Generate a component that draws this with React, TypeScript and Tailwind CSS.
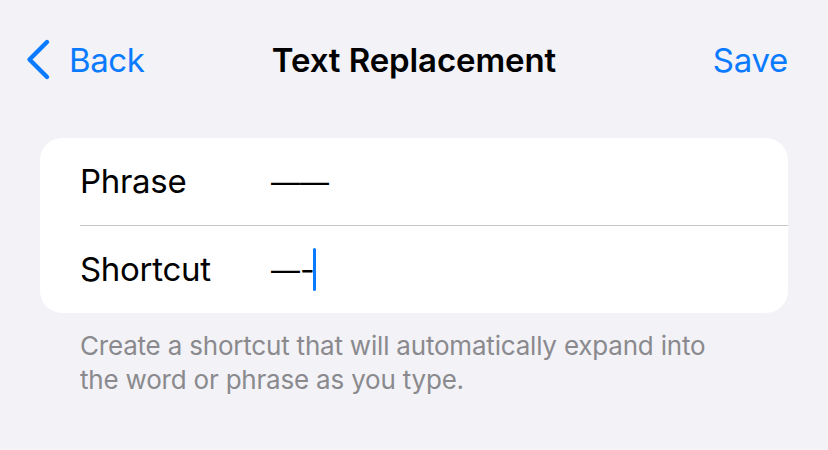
export default function App() {
  return (
    <div
      className="w-[828px] h-[450px] bg-[#f2f2f7] overflow-hidden"
      style={{ fontFamily: 'Inter, "Noto Sans", sans-serif' }}
    >
      {/* Navigation bar */}
      <div className="relative h-[120px] flex items-start pt-[38px] px-[26px]">
        <button className="flex items-center text-[#0a7aff]">
          <svg width="26" height="44" viewBox="0 0 26 44" fill="none">
            <polyline
              points="21,4 3.5,21.5 21,39"
              stroke="currentColor"
              strokeWidth="4.4"
              strokeLinecap="round"
              strokeLinejoin="round"
            />
          </svg>
          <span className="ml-[17px] text-[33px] tracking-[-0.4px] leading-[44px]">Back</span>
        </button>
        <h1 className="absolute left-0 right-0 top-[38px] text-center text-[33px] leading-[44px] font-semibold tracking-[-0.1px] text-black">
          Text Replacement
        </h1>
        <button className="ml-auto mr-[14px] text-[#0a7aff] text-[33px] leading-[44px] tracking-[-0.3px]">
          Save
        </button>
      </div>

      {/* Form card */}
      <div className="mx-[40px] mt-[18px] bg-white rounded-[22px] overflow-hidden">
        <div className="flex items-center h-[87px] pl-[40px]">
          <div className="flex items-baseline h-[48px] leading-[48px] text-black -mt-[2px]">
            <span className="w-[191px] text-[33px] tracking-[-0.3px]">Phrase</span>
            <span className="text-[29px]">——</span>
          </div>
        </div>
        <div className="ml-[40px] h-px bg-[#c6c6c8]" />
        <div className="flex items-center h-[87px] pl-[40px]">
          <div className="flex items-baseline h-[48px] leading-[48px] text-black -mt-[2px]">
            <span className="w-[191px] text-[33px] tracking-[-0.3px]">Shortcut</span>
            <span className="text-[29px]">—</span>
            <span className="text-[32px]">-</span>
            <span className="self-center w-[3px] h-[43px] rounded-full bg-[#0a7aff] -ml-[2px] mt-[2px]" />
          </div>
        </div>
      </div>

      {/* Footer note */}
      <p className="mx-[80px] mt-[16px] text-[26px] leading-[34px] tracking-[-0.2px] text-[#8a8a8e]">
        Create a shortcut that will automatically expand into
        <br />
        the word or phrase as you type.
      </p>
    </div>
  );
}
